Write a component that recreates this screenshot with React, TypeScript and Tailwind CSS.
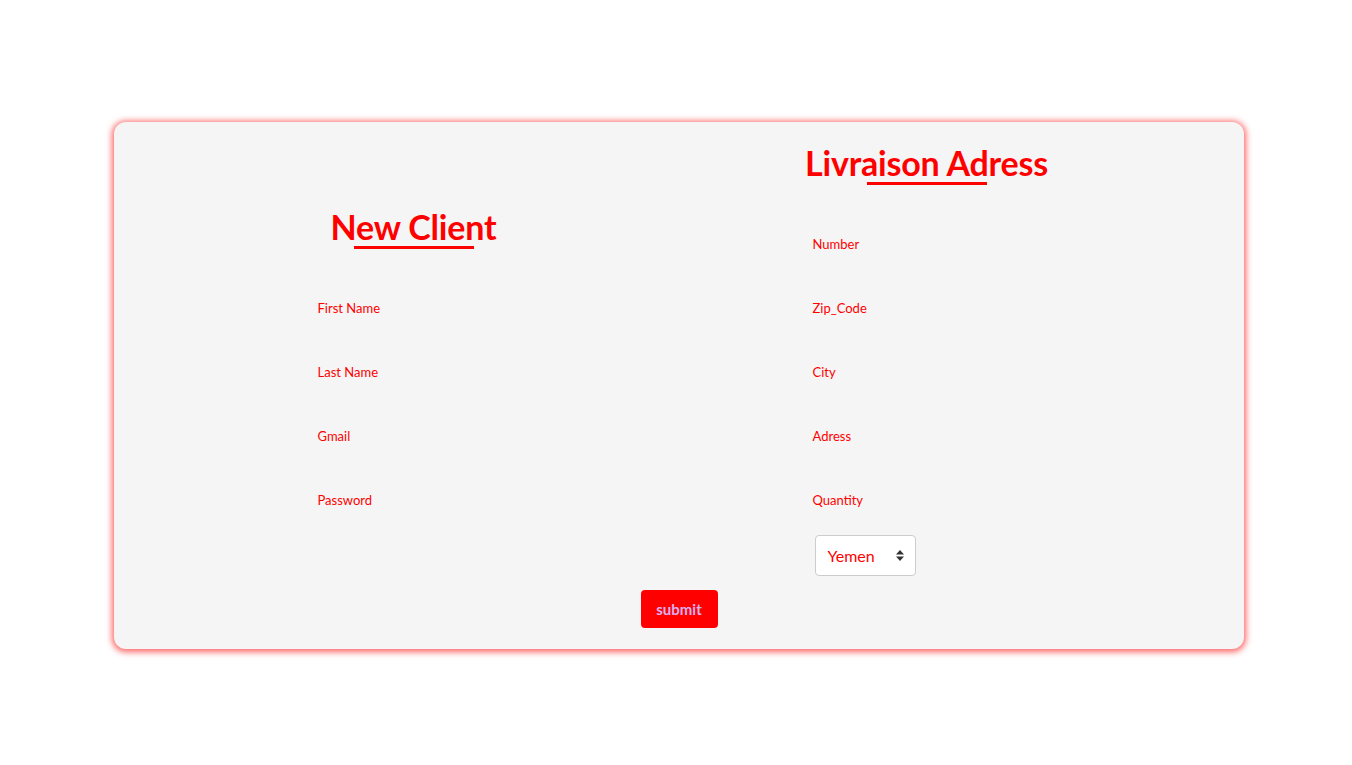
export default function App() {
  const left = ["First Name", "Last Name", "Gmail", "Password"];
  const right = ["Number", "Zip_Code", "City", "Adress"];

  const Heading = ({ title }: { title: string }) => (
    <div className="flex flex-col items-center">
      <h2 className="pt-[2px] text-[34px] leading-[41px] font-bold tracking-[-0.2px] text-[#ff0000] whitespace-nowrap">{title}</h2>
      <div className="-mt-[1px] w-[120px] h-[3px] bg-[#ff0000]" />
    </div>
  );

  const Field = ({ label }: { label: string }) => (
    <div className="flex flex-col">
      <label className="text-[13px] leading-4 text-[#ff0000]">{label}</label>
      <div className="h-12" />
    </div>
  );

  return (
    <div className="min-h-[765px] bg-white pt-[122px] font-['Lato',sans-serif]">
      <div className="ml-[114px] w-[1130px] bg-[#f5f5f5] rounded-[12px] shadow-[0_1px_6px_2px_rgba(255,0,0,0.6)] pt-[18px] pb-[21px] flex flex-col items-center">
        <div className="flex items-center gap-[303px]">
          {/* New Client */}
          <div className="w-[192px] pb-[4px] flex flex-col">
            <Heading title="New Client" />
            <div className="mt-[51px] flex flex-col">
              {left.map((l, i) =>
                i === left.length - 1 ? (
                  <label key={l} className="text-[13px] leading-4 text-[#ff0000]">{l}</label>
                ) : (
                  <Field key={l} label={l} />
                )
              )}
            </div>
          </div>

          {/* Livraison */}
          <div className="w-[228px] flex flex-col">
            <Heading title="Livraison Adress" />
            <div className="mt-[51px] flex flex-col">
              {right.map((l) => (
                <Field key={l} label={l} />
              ))}
              <label className="text-[13px] leading-4 text-[#ff0000]">Quantity</label>
              <div className="mt-[27px] ml-[2px] w-[101px] h-[41px] bg-white border border-[#cccccc] rounded-[4px] flex items-center justify-between pl-3 pr-[11px]">
                <span className="text-[16px] text-[#ff0000]">Yemen</span>
                <svg width="8" height="11" viewBox="0 0 8 11">
                  <path d="M4 0 L8 4.5 L0 4.5 Z" fill="#333" />
                  <path d="M4 11 L8 6.5 L0 6.5 Z" fill="#333" />
                </svg>
              </div>
            </div>
          </div>
        </div>

        <button className="mt-[14px] w-[77px] h-[38px] bg-[#ff0000] rounded-[4px] text-[15px] font-bold text-[#d8b0f0]">
          submit
        </button>
      </div>
    </div>
  );
}
